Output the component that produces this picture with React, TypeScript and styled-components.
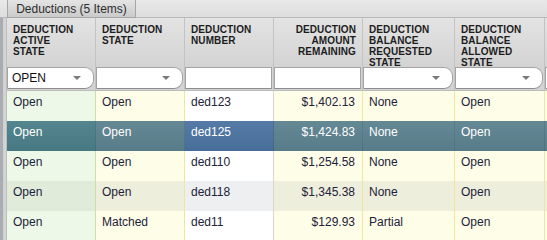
import React from "react";
import styled, { createGlobalStyle, css } from "styled-components";

const Global = createGlobalStyle`
  html, body { margin: 0; padding: 0; background: #e2e2e2; }
  body { font-family: Arial, "Liberation Sans", sans-serif; width: 547px; height: 240px; overflow: hidden; }
`;

type Kind = "green" | "yellow" | "white";

const COLS: { w: number; kind: Kind; header: string[]; right?: boolean; filter: "combo" | "text" }[] = [
  { w: 89, kind: "green", header: ["DEDUCTION", "ACTIVE", "STATE"], filter: "combo" },
  { w: 89, kind: "yellow", header: ["DEDUCTION", "STATE"], filter: "combo" },
  { w: 89, kind: "white", header: ["DEDUCTION", "NUMBER"], filter: "text" },
  { w: 89, kind: "yellow", header: ["DEDUCTION", "AMOUNT", "REMAINING"], right: true, filter: "text" },
  { w: 92, kind: "yellow", header: ["DEDUCTION", "BALANCE", "REQUESTED", "STATE"], filter: "combo" },
  { w: 90, kind: "yellow", header: ["DEDUCTION", "BALANCE", "ALLOWED", "STATE"], filter: "combo" },
  { w: 40, kind: "yellow", header: [""], filter: "combo" },
];

const ROWS = [
  ["Open", "Open", "ded123", "$1,402.13", "None", "Open", ""],
  ["Open", "Open", "ded125", "$1,424.83", "None", "Open", ""],
  ["Open", "Open", "ded110", "$1,254.58", "None", "Open", ""],
  ["Open", "Open", "ded118", "$1,345.38", "None", "Open", ""],
  ["Open", "Matched", "ded11", "$129.93", "Partial", "Open", ""],
];

const SELECTED = 1;
const ALT = 3;

const bg: Record<Kind, { normal: string; alt: string; sel: string; border: string }> = {
  green: { normal: "#edf8e8", alt: "#e0ebda", sel: "#4a7e88", border: "#c6e2a6" },
  yellow: { normal: "#fefde8", alt: "#eeeedc", sel: "#5b818e", border: "#eee79c" },
  white: { normal: "#ffffff", alt: "#eeeff1", sel: "#4a72a0", border: "#d6d6d6" },
};

const Page = styled.div`
  width: 547px;
  height: 240px;
  display: flex;
  flex-direction: column;
  overflow: hidden;
`;

const TabBar = styled.div`
  height: 18px;
  flex: none;
  display: flex;
  padding-left: 7px;
  background: linear-gradient(#e9e9e9, #dddddd);
  border-bottom: 1px solid #b9b9b9;
  box-sizing: border-box;
`;

const Tab = styled.div`
  width: 129px;
  height: 18px;
  box-sizing: border-box;
  display: flex;
  align-items: center;
  justify-content: center;
  font-size: 12px;
  color: #2e2e2e;
  background: linear-gradient(#e4e4e4, #cbcbcb);
  border: 1px solid #a6a6a6;
  border-top: none;
  padding-top: 1px;
`;

const Body = styled.div`
  flex: 1;
  display: flex;
  min-height: 0;
`;

const Strip = styled.div`
  width: 7px;
  flex: none;
  background: linear-gradient(90deg, #a9adb1 0, #a9adb1 3px, #cfcfcf 3px, #d6d6d6 6px, #bdbdbd 6px);
`;

const Grid = styled.div<{ $template: string }>`
  display: grid;
  grid-template-columns: ${(p) => p.$template};
  grid-template-rows: 49px 24px repeat(5, 30px);
  overflow: hidden;
`;

const HeaderCell = styled.div<{ $right?: boolean }>`
  box-sizing: border-box;
  border-right: 1px solid #c3c3c3;
  background: linear-gradient(#e3e3e3, #d3d3d3);
  padding: 6px 6px 0 6px;
  font-size: 10px;
  font-weight: bold;
  line-height: 11px;
  color: #1d1d1d;
  text-align: ${(p) => (p.$right ? "right" : "left")};
  letter-spacing: 0.1px;
`;

const FilterCell = styled.div`
  box-sizing: border-box;
  background: #d3d3d3;
  border-right: 1px solid #c3c3c3;
  border-bottom: 1px solid #bcbcbc;
  padding: 0 1px 1px 0;
  display: flex;
`;

const FilterBox = styled.div<{ $combo: boolean }>`
  flex: 1;
  box-sizing: border-box;
  background: #fff;
  border: 1px solid #a4a4a4;
  border-bottom-color: #8d8d8d;
  ${(p) =>
    p.$combo &&
    css`
      border-radius: 0 9px 9px 0;
    `}
  display: flex;
  align-items: center;
  padding: 0 4px;
  font-size: 12px;
  color: #111;
  position: relative;
`;

const Arrow = styled.span`
  position: absolute;
  right: 12px;
  top: 50%;
  margin-top: -2px;
  width: 0;
  height: 0;
  border-left: 4px solid transparent;
  border-right: 4px solid transparent;
  border-top: 4px solid #7a7a7a;
`;

const DataCell = styled.div<{ $kind: Kind; $state: "normal" | "alt" | "sel"; $right?: boolean }>`
  box-sizing: border-box;
  display: flex;
  align-items: flex-start;
  justify-content: ${(p) => (p.$right ? "flex-end" : "flex-start")};
  padding: 4px 7px 0 6px;
  font-size: 12px;
  line-height: 14px;
  color: ${(p) => (p.$state === "sel" ? "#ffffff" : "#22223a")};
  background: ${(p) =>
    p.$state === "sel"
      ? `linear-gradient(rgba(255,255,255,0.06), rgba(0,0,0,0.04)), ${bg[p.$kind].sel}`
      : bg[p.$kind][p.$state]};
  border-right: 1px solid
    ${(p) => (p.$state === "sel" ? "rgba(0,0,0,0.08)" : bg[p.$kind].border)};
  white-space: nowrap;
`;

export default function App() {
  const template = COLS.map((c) => `${c.w}px`).join(" ");
  return (
    <Page>
      <Global />
      <TabBar>
        <Tab>Deductions (5 Items)</Tab>
      </TabBar>
      <Body>
        <Strip />
        <Grid $template={template}>
          {COLS.map((c, i) => (
            <HeaderCell key={`h${i}`} $right={c.right}>
              {c.header.map((l, j) => (
                <div key={j}>{l}</div>
              ))}
            </HeaderCell>
          ))}
          {COLS.map((c, i) => (
            <FilterCell key={`f${i}`}>
              <FilterBox $combo={c.filter === "combo"}>
                {i === 0 ? "OPEN" : ""}
                {c.filter === "combo" && <Arrow />}
              </FilterBox>
            </FilterCell>
          ))}
          {ROWS.map((r, ri) =>
            r.map((v, ci) => (
              <DataCell
                key={`${ri}-${ci}`}
                $kind={COLS[ci].kind}
                $right={COLS[ci].right}
                $state={ri === SELECTED ? "sel" : ri === ALT ? "alt" : "normal"}
              >
                {v}
              </DataCell>
            ))
          )}
        </Grid>
      </Body>
    </Page>
  );
}
